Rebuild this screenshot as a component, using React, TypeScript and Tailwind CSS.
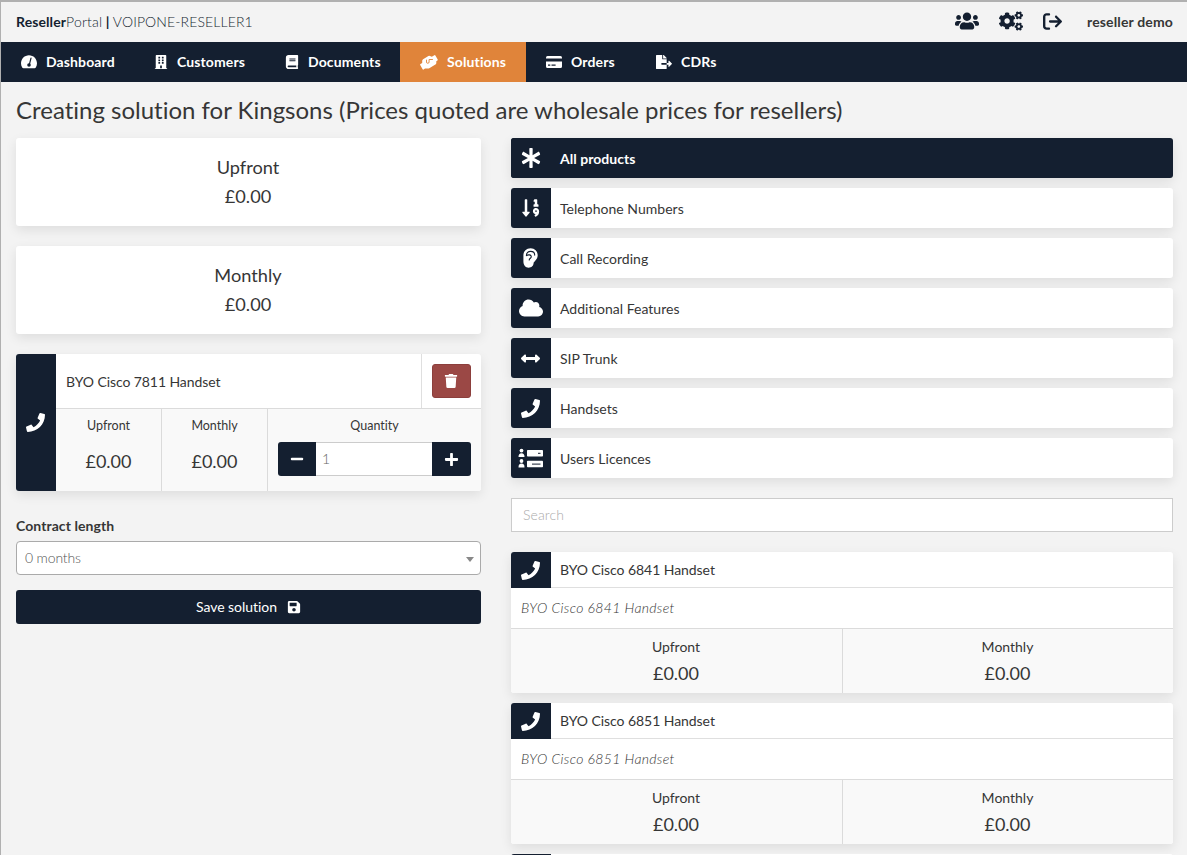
import type { ReactNode } from 'react';
import {
    FaBuilding,
    FaBook,
    FaFileExport,
    FaUsers,
    FaCogs,
    FaAsterisk,
    FaSortNumericDown,
    FaCloud,
    FaArrowsAltH,
    FaPhone,
    FaTrash,
    FaMinus,
    FaPlus,
    FaSave,
} from 'react-icons/fa';
import { FaArrowRightFromBracket } from 'react-icons/fa6';

const cardShadow = 'shadow-[0_4px_12px_rgba(0,0,0,0.09)]';

// Gauge with a single needle
function DashboardIcon() {
    return (
        <svg width="16" height="14" viewBox="0 0 16 14" className="shrink-0">
            <path d="M8 0.3C3.6 0.3 0 3.9 0 8.3C0 9.9 0.4 11.3 1.2 12.5C1.5 13 1.9 13.3 2.4 13.3H13.6C14.1 13.3 14.5 13 14.8 12.5C15.6 11.3 16 9.9 16 8.3C16 3.9 12.4 0.3 8 0.3Z" fill="white" />
            <path d="M10 3.2L8.4 9.3" stroke="#141f30" strokeWidth="1.2" strokeLinecap="round" />
            <circle cx="8" cy="10" r="1.8" fill="#141f30" />
        </svg>
    );
}

// Two clasped hands
function SolutionsIcon() {
    return (
        <svg width="18" height="15" viewBox="0 0 18 15" className="shrink-0">
            <path d="M0.5 9L2.2 8.1V5.8Q2.2 4.8 3.1 4.3L8.4 1.1Q9.2 0.7 10 1L11.8 1.7L14.4 0.2Q15 -0.1 15.4 0.5L17.7 4.6Q18 5.2 17.4 5.6L16.3 6.3V8Q16.3 9.1 15.4 9.6L9.3 13.2Q8.7 13.6 8 13.6H5L3.6 14.6Q3 15 2.6 14.3L0.2 10.1Q-0.1 9.4 0.5 9Z" fill="white" />
            <path d="M12.9 4.5H9.1V7Q9.1 8.3 7.8 8.3Q6.5 8.3 6.5 7V4.7" fill="none" stroke="#e0843a" strokeWidth="0.9" />
        </svg>
    );
}

// Credit card with a clear stripe
function OrdersIcon() {
    return (
        <svg width="16" height="14" viewBox="0 0 16 14" fill="white" className="shrink-0">
            <path d="M1.5 1H14.5Q16 1 16 2.5V3.5H0V2.5Q0 1 1.5 1Z" />
            <path fillRule="evenodd" d="M0 6.5H16V11.5Q16 13 14.5 13H1.5Q0 13 0 11.5ZM2 9.5V10.7H4.3V9.5ZM5.5 9.5V10.7H9.6V9.5Z" />
        </svg>
    );
}

// Ear with an inner curl, used for call recording
function EarIcon() {
    return (
        <svg width="15" height="20" viewBox="0 0 15 20" fill="none">
            <path d="M7.6 0.3C3.5 0.3 0.4 3.4 0.4 7.4V13.5C0.4 17 2.6 19.7 5.6 19.7C8.5 19.7 10.6 17.6 10.6 15C10.6 13.6 14.7 11.8 14.7 7.2C14.7 3.2 11.6 0.3 7.6 0.3Z" fill="white" />
            <path d="M3.4 7.5C3.4 5 5.2 3.4 7.6 3.4C10 3.4 11.7 5 11.7 7.1M3.5 7.6C5 6.4 8.3 6.6 8.3 8.7C8.3 10.3 6.2 10.2 6.2 12" stroke="#141f30" strokeWidth="1.1" strokeLinecap="round" />
        </svg>
    );
}

// Two people next to two licence rows
function LicencesIcon() {
    return (
        <svg width="25" height="20" viewBox="0 0 25 20" fill="white" className="shrink-0">
            <circle cx="3.5" cy="2.6" r="1.9" />
            <path d="M0.5 9C0.5 6.3 1.5 5.2 3.5 5.2S6.5 6.3 6.5 9Z" />
            <circle cx="3.5" cy="13" r="1.9" />
            <path d="M0.5 19.4C0.5 16.7 1.5 15.6 3.5 15.6S6.5 16.7 6.5 19.4Z" />
            <rect x="9" y="2" width="16" height="6.5" rx="0.8" />
            <rect x="9" y="12.8" width="16" height="6.5" rx="0.8" />
            <rect x="20" y="4.8" width="2.5" height="1" fill="#141f30" />
            <rect x="14" y="15.6" width="8.5" height="1" fill="#141f30" />
        </svg>
    );
}

const navItems = [
    { label: 'Dashboard', icon: <DashboardIcon />, width: 'w-[134px] pl-5 gap-[9px]' },
    { label: 'Customers', icon: <FaBuilding size={14} />, width: 'w-[131px] pl-[18px] gap-2' },
    { label: 'Documents', icon: <FaBook size={14} />, width: 'w-[134px] pl-[18px] gap-2' },
    { label: 'Solutions', icon: <SolutionsIcon />, width: 'w-[126px] pl-[21px] gap-2.5', active: true },
    { label: 'Orders', icon: <OrdersIcon />, width: 'w-[110px] pl-5 gap-[9px]' },
    { label: 'CDRs', icon: <FaFileExport size={16} />, width: 'w-[100px] pl-5 gap-[9px]' },
];

const categories = [
    { label: 'All products', icon: <FaAsterisk size={20} />, active: true },
    { label: 'Telephone Numbers', icon: <FaSortNumericDown size={20} /> },
    { label: 'Call Recording', icon: <EarIcon /> },
    { label: 'Additional Features', icon: <FaCloud size={24} /> },
    { label: 'SIP Trunk', icon: <FaArrowsAltH size={19} /> },
    { label: 'Handsets', icon: <FaPhone size={19} /> },
    { label: 'Users Licences', icon: <LicencesIcon /> },
];

const products = ['BYO Cisco 6841 Handset', 'BYO Cisco 6851 Handset'];

function IconTile({ children }: { children: ReactNode }) {
    return <div className="flex items-center justify-center w-10 pr-px bg-[#141f30] text-white">{children}</div>;
}

function TotalCard({ title }: { title: string }) {
    return (
        <div className={`h-[88px] mb-5 pt-[15px] pr-px bg-white rounded-[3px] text-center text-[18.2px] leading-[29px] ${cardShadow}`}>
            <div>{title}</div>
            <div>£0.00</div>
        </div>
    );
}

function CategoryRow({ label, icon, active }: { label: string; icon: ReactNode; active?: boolean }) {
    return (
        <div className={`flex h-10 rounded-[3px] overflow-hidden ${cardShadow} ${active ? 'bg-[#141f30] text-white font-bold' : 'bg-white'}`}>
            <IconTile>{icon}</IconTile>
            <div className="pl-[9px] pt-px leading-10 tracking-[0.03px]">{label}</div>
        </div>
    );
}

function ProductCard({ name }: { name: string }) {
    return (
        <div className={`h-[141px] rounded-[3px] overflow-hidden bg-white ${cardShadow}`}>
            <div className="flex h-9">
                <IconTile><FaPhone size={19} /></IconTile>
                <div className="flex-1 pl-[9px] leading-9 tracking-[-0.06px] border-b border-[#dfdfdf]">{name}</div>
            </div>
            <div className="h-[41px] pl-2.5 leading-10 italic font-light tracking-[0.32px] border-b border-[#dbdbdb]">{name}</div>
            <div className="grid grid-cols-2 h-16 bg-[#f9f9f9] text-center">
                <div className="pt-[7px] pr-px">
                    <div className="leading-[22px]">Upfront</div>
                    <div className="text-[18px] leading-[31px]">£0.00</div>
                </div>
                <div className="pt-[7px] pr-px border-l border-[#dbdbdb]">
                    <div className="leading-[22px]">Monthly</div>
                    <div className="text-[18px] leading-[31px]">£0.00</div>
                </div>
            </div>
        </div>
    );
}

function BasketItem() {
    return (
        <div className={`flex h-[137px] rounded-[3px] overflow-hidden bg-white ${cardShadow}`}>
            <IconTile><FaPhone size={19} /></IconTile>
            <div className="flex-1">
                <div className="flex h-[55px] border-b border-[#dbdbdb]">
                    <div className="flex-1 pl-2.5 leading-[56px] tracking-[-0.08px]">BYO Cisco 7811 Handset</div>
                    <div className="w-[60px] p-2.5 border-l border-[#dfdfdf]">
                        <button className="flex items-center justify-center w-[39px] h-[34px] pr-px rounded-[3px] bg-[#9b4845] border border-[#8c3f3d] text-white">
                            <FaTrash size={14} />
                        </button>
                    </div>
                </div>
                <div className="flex h-[82px] bg-[#f9f9f9] text-center">
                    <div className="w-[106px] pt-[7px] border-r border-[#dbdbdb]">
                        <div className="text-[12.5px] leading-5">Upfront</div>
                        <div className="mt-2.5 text-[18px] leading-[31px]">£0.00</div>
                    </div>
                    <div className="w-[106px] pt-[7px] border-r border-[#dbdbdb]">
                        <div className="text-[12.5px] leading-5">Monthly</div>
                        <div className="mt-2.5 text-[18px] leading-[31px]">£0.00</div>
                    </div>
                    <div className="flex-1 px-2.5 pt-[7px]">
                        <div className="text-[12.5px] leading-5">Quantity</div>
                        <div className="flex h-[34px] mt-1.5">
                            <button className="flex items-center justify-center w-[38px] rounded-l-[3px] bg-[#141f30] text-white"><FaMinus size={14} /></button>
                            <div className="flex-1 pl-[6px] text-left leading-8 bg-white border-y border-[#ccc] text-[#666] font-light">1</div>
                            <button className="flex items-center justify-center w-[39px] pr-px rounded-r-[3px] bg-[#141f30] text-white"><FaPlus size={15} /></button>
                        </div>
                    </div>
                </div>
            </div>
        </div>
    );
}

export default function App() {
    return (
        <div className="h-[855px] overflow-hidden bg-[#f3f3f3] border-t-2 border-l border-[#b0b0b0] text-[#363636] font-['Lato',sans-serif] text-[14px] [font-variant-ligatures:none]">
            <header className="flex items-center justify-between h-10 pl-[15px] pr-3.5">
                <div className="text-[#141f30] leading-10">
                    <span className="font-bold tracking-[0.1px]">Reseller</span>
                    <span className="font-light tracking-[0.2px]">Portal</span>
                    <span className="font-bold"> | </span>
                    <span className="font-light tracking-[0.12px]">VOIPONE-RESELLER1</span>
                </div>
                <div className="flex items-center pb-0.5 text-[#141f30]">
                    <FaUsers size={24} className="mr-5" />
                    <FaCogs size={24} className="mr-5" />
                    <FaArrowRightFromBracket size={19} className="mr-[25px]" />
                    <span className="font-bold tracking-[0.15px] text-[#363636]">reseller demo</span>
                </div>
            </header>

            <nav className="flex h-10 bg-[#141f30] text-white font-bold">
                {navItems.map((item) => (
                    <div key={item.label} className={`flex items-center h-10 ${item.width} ${item.active ? 'bg-[#e0843a]' : ''}`}>
                        <span className="flex justify-center w-4">{item.icon}</span>
                        <span className="pb-0.5 tracking-[0.12px]">{item.label}</span>
                    </div>
                ))}
            </nav>

            <main className="pl-[15px] pr-3.5">
                <h1 className="h-14 leading-[55px] text-[24px] whitespace-nowrap">
                    Creating solution for Kingsons (Prices quoted are wholesale prices for resellers)
                </h1>

                <div className="flex gap-[30px]">
                    <section className="w-[465px]">
                        <TotalCard title="Upfront" />
                        <TotalCard title="Monthly" />
                        <BasketItem />

                        <div className="mt-[25px] mb-[5px] leading-5 font-bold tracking-[0.07px]">Contract length</div>
                        <div className="flex items-center justify-between h-[34px] pl-2 pr-[6px] bg-white border border-[#aaa] rounded text-[#555] font-light">
                            <span className="pb-0.5 tracking-[-0.15px]">0 months</span>
                            {/* select arrow */}
                            <span className="border-x-4 border-t-[5px] border-x-transparent border-t-[#888] mt-0.5" />
                        </div>
                        <button className="flex items-center justify-center gap-2.5 w-full h-[34px] mt-[15px] rounded-[3px] bg-[#141f30] text-white">
                            <span className="pb-0.5 tracking-[-0.05px]">Save solution</span> <FaSave size={14} />
                        </button>
                    </section>

                    <section className="flex-1">
                        <div className="flex flex-col gap-2.5">
                            {categories.map((category) => (
                                <CategoryRow key={category.label} {...category} />
                            ))}
                        </div>
                        <div className="h-[34px] my-5 pl-[11px] leading-[31px] bg-white border border-[#ccc] text-[#aaa] font-light tracking-[0.1px]">Search</div>
                        <div className="flex flex-col gap-2.5">
                            {products.map((name) => (
                                <ProductCard key={name} name={name} />
                            ))}
                            {/* Top edge of the next card in the list */}
                            <div className="flex h-9 rounded-t-[3px] overflow-hidden bg-white">
                                <div className="w-10 bg-[#141f30]" />
                            </div>
                        </div>
                    </section>
                </div>
            </main>
        </div>
    );
}
